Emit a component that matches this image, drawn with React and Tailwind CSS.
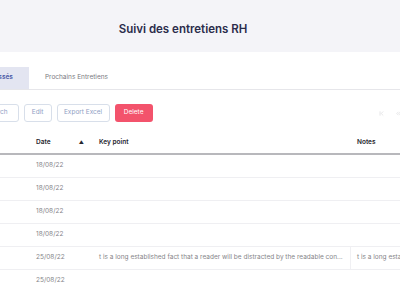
import { ChevronFirst, ChevronsLeft } from 'lucide-react'

const rows = [
  { date: '18/08/22', key: '', notes: '' },
  { date: '18/08/22', key: '', notes: '' },
  { date: '18/08/22', key: '', notes: '' },
  { date: '18/08/22', key: '', notes: '' },
  {
    date: '25/08/22',
    key: 't is a long established fact that a reader will be distracted by the readable con...',
    notes: 't is a long established fact that a reader will be distracted by the readable con...',
  },
  { date: '25/08/22', key: '', notes: '' },
]

export default function App() {
  return (
    <div className="w-[400px] h-[284px] overflow-hidden bg-white font-['Inter',sans-serif]">
      <div className="h-[52px] bg-[#f4f4f8] flex items-center justify-center">
        <h1 className="text-[11.5px] font-semibold text-[#2b2c4b] ml-[-34px] mt-[7px]">Suivi des entretiens RH</h1>
      </div>

      <div className="mt-[14px] border-b border-[#e6e6ea] flex items-end h-[24px]">
        <div className="-ml-[59px] h-[22px] px-[16px] bg-[#e3e5f1] flex items-center text-[6.5px] font-semibold text-[#4a58a6]">
          Entretiens passés
        </div>
        <div className="h-[22px] px-[16px] flex items-center text-[6.5px] text-[#7a7a82]">Prochains Entretiens</div>
      </div>

      <div className="mt-[14px] flex items-center">
        <div className="-ml-[25px] flex gap-[5px]">
          <button className="h-[18px] px-[10px] rounded-[3px] border border-[#d8dfea] text-[6.5px] text-[#8fa0c4]">Search</button>
          <button className="h-[18px] w-[28px] rounded-[3px] border border-[#d8dfea] text-[6.5px] text-[#8fa0c4]">Edit</button>
          <button className="h-[18px] w-[53px] rounded-[3px] border border-[#d8dfea] text-[6.5px] text-[#8fa0c4]">Export Excel</button>
          <button className="h-[18px] w-[38px] rounded-[3px] bg-[#f3536c] text-[6.5px] text-white">Delete</button>
        </div>
        <div className="ml-auto flex items-center gap-[10px] text-[#c8c8cc] mr-[-2px]">
          <ChevronFirst size={7} strokeWidth={1.5} />
          <ChevronsLeft size={7} strokeWidth={1.5} />
        </div>
      </div>

      <div className="mt-[10px] text-[6.5px]">
        <div className="grid grid-cols-[30px_63px_258px_1fr] h-[23px] items-center border-b-2 border-[#b8b8bc] font-semibold text-[#26262e]">
          <div />
          <div className="pl-[6px] flex items-center">
            <span>Date</span>
            <span className="ml-auto mr-[9px] text-[5px]">▲</span>
          </div>
          <div className="pl-[6px]">Key point</div>
          <div className="pl-[6px]">Notes</div>
        </div>
        {rows.map((r, i) => (
          <div key={i} className="grid grid-cols-[30px_63px_258px_1fr] h-[23px] items-center border-b border-[#efeff2] text-[#858589]">
            <div />
            <div className="pl-[6px]">{r.date}</div>
            <div className={`pl-[6px] h-full flex items-center whitespace-nowrap overflow-hidden ${r.key ? 'border-r border-[#f0f0f3]' : ''}`}>{r.key}</div>
            <div className="pl-[6px] whitespace-nowrap overflow-hidden">{r.notes}</div>
          </div>
        ))}
      </div>
    </div>
  )
}
